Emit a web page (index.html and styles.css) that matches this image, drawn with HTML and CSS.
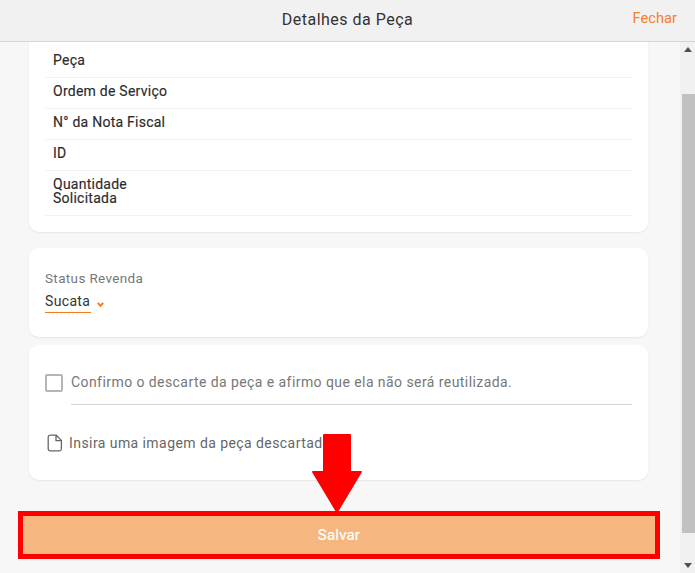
FILE: index.html
```html
<!DOCTYPE html>
<html lang="pt-BR">
<head>
<meta charset="utf-8">
<title>Detalhes da Peça</title>
<link rel="stylesheet" href="styles.css">
</head>
<body>
<header class="header">
  <h1 class="title">Detalhes da Peça</h1>
  <a class="close">Fechar</a>
</header>
<div class="viewport">
  <main class="content">
    <section class="card details">
      <div class="row"><span>Peça</span></div>
      <div class="row"><span>Ordem de Serviço</span></div>
      <div class="row"><span>N° da Nota Fiscal</span></div>
      <div class="row"><span>ID</span></div>
      <div class="row tall"><span>Quantidade<br>Solicitada</span></div>
    </section>
    <section class="card status">
      <div class="status-label">Status Revenda</div>
      <div class="select">
        <span class="select-value">Sucata</span>
        <svg class="chevron" width="7" height="5" viewBox="0 0 7 5"><path d="M.8.8l2.7 3L6.2.8" fill="none" stroke="#f57c1f" stroke-width="2"/></svg>
      </div>
    </section>
    <section class="card confirm">
      <div class="check-row">
        <span class="checkbox"></span>
        <span class="check-text">Confirmo o descarte da peça e afirmo que ela não será reutilizada.</span>
      </div>
      <div class="file-row">
        <svg class="file-icon" width="16" height="18" viewBox="0 0 16 18"><path d="M3 1.2h6.2L14.4 6.4V15a2 2 0 0 1-2 1.8H3A2 2 0 0 1 1.2 15V3A2 2 0 0 1 3 1.2zM9 1.4V6.6h5.2" fill="none" stroke="#666" stroke-width="1.3"/></svg>
        <span class="file-text">Insira uma imagem da peça descartada.</span>
      </div>
    </section>
    <div class="save-wrap"><button class="save">Salvar</button></div>
  </main>
  <div class="scrollbar">
    <div class="arrow-cell"><svg width="8" height="5" viewBox="0 0 8 5"><path d="M0 5L4 0l4 5z" fill="#505050"/></svg></div>
    <div class="track"><div class="thumb"></div></div>
    <div class="arrow-cell"><svg width="8" height="5" viewBox="0 0 8 5"><path d="M0 0l4 5 4-5z" fill="#505050"/></svg></div>
  </div>
  <svg class="red-arrow" width="50" height="78" viewBox="0 0 50 78"><path d="M12 0h26a1 1 0 0 1 1 1v36h10a1 1 0 0 1 1 1L26 78h-2L0 38a1 1 0 0 1 1-1h10V1a1 1 0 0 1 1-1z" fill="#f00"/></svg>
</div>
</body>
</html>
```
FILE: styles.css
```css
* { box-sizing: border-box; }
html, body { height: 100%; }
body {
  margin: 0;
  display: flex;
  flex-direction: column;
  height: 573px;
  overflow: hidden;
  background: #f7f7f7;
  font-family: Roboto, "Liberation Sans", sans-serif;
  color: #333;
}
.header {
  height: 42px;
  flex: none;
  display: flex;
  align-items: center;
  justify-content: center;
  position: relative;
  background: #f1f1f1;
  border-bottom: 1px solid #d6d6d6;
}
.title {
  margin: 0 0 3px;
  font-size: 16px;
  font-weight: 400;
  letter-spacing: 0.5px;
  color: #333;
}
.close {
  position: absolute;
  right: 18px;
  top: 10px;
  font-size: 14.5px;
  letter-spacing: 0.1px;
  color: #f58025;
}
.viewport {
  position: relative;
  flex: 1;
  display: flex;
  min-height: 0;
}
.content {
  flex: 1;
  display: flex;
  flex-direction: column;
  padding: 0 0 0 29px;
}
.card {
  width: 619px;
  background: #fff;
  border-radius: 10px;
  box-shadow: 0 1px 2px rgba(0,0,0,0.07);
}
.details {
  height: 190px;
  padding: 0 16px;
  border-radius: 0 0 10px 10px;
}
.row {
  height: 31px;
  padding: 6px 8px 0;
  border-bottom: 1px solid #f3f3f3;
  font-size: 14px;
  line-height: 14px;
  font-weight: 400;
  letter-spacing: 0.25px;
  color: #2b2b2b;
  -webkit-text-stroke: 0.15px #2b2b2b;
}
.row:first-child { height: 36px; padding-top: 11px; }
.row.tall { height: 45px; padding-top: 6px; }
.status {
  height: 89px;
  margin-top: 16px;
  padding: 22px 16px 0;
}
.status-label {
  font-size: 13.5px;
  line-height: 16px;
  letter-spacing: 0.35px;
  color: #777;
}
.select {
  display: flex;
  align-items: flex-start;
  margin-top: 1px;
}
.select-value {
  width: 46px;
  height: 26px;
  padding-top: 6px;
  border-bottom: 1px solid #f57c1f;
  font-size: 14px;
  line-height: 16px;
  letter-spacing: 0.35px;
  color: #333;
}
.chevron { margin: 15px 0 0 6px; }
.confirm {
  height: 135px;
  margin-top: 8px;
  padding: 29px 16px 0;
}
.check-row {
  display: flex;
  align-items: flex-start;
  gap: 8px;
}
.checkbox {
  width: 18px;
  height: 18px;
  flex: none;
  border: 2px solid #b5b5b5;
  border-radius: 2px;
}
.check-text {
  flex: 1;
  height: 31px;
  border-bottom: 1px solid #d5d5d5;
  font-size: 14px;
  line-height: 16px;
  letter-spacing: 0.43px;
  color: #777;
}
.file-row {
  display: flex;
  align-items: center;
  gap: 6px;
  margin-top: 29px;
  margin-left: 2px;
}
.file-text {
  font-size: 14px;
  line-height: 16px;
  letter-spacing: 0.43px;
  color: #666;
}
.save-wrap {
  margin: 31px 0 0 -11px;
  width: 642px;
}
.save {
  display: block;
  width: 100%;
  height: 48px;
  border: 5px solid #f00;
  background: #f5b680;
  color: #fff;
  font-family: inherit;
  font-size: 15px;
  font-weight: 400;
  letter-spacing: 0.2px;
  -webkit-text-stroke: 0.2px #fff;
}
.scrollbar {
  width: 15px;
  flex: none;
  display: flex;
  flex-direction: column;
  background: #f1f1f1;
}
.arrow-cell {
  height: 15px;
  flex: none;
  display: flex;
  align-items: center;
  justify-content: center;
}
.track {
  flex: 1;
  padding: 37px 0 25px 2px;
}
.thumb {
  height: 100%;
  background: #c1c1c1;
}
.red-arrow {
  position: absolute;
  left: 312px;
  top: 392px;
}
```
